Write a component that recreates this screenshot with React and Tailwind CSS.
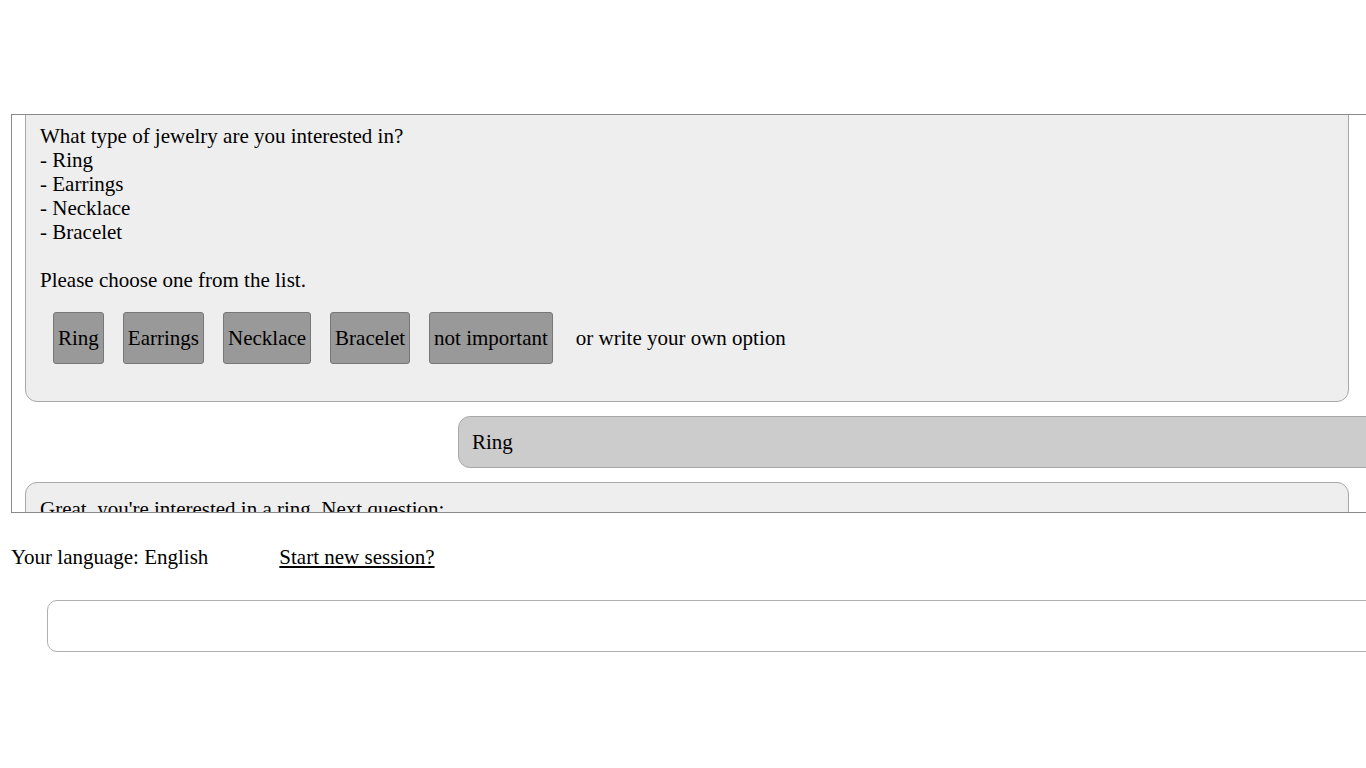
import React from 'react';

const options = ['Ring', 'Earrings', 'Necklace', 'Bracelet', 'not important'];

export default function App() {
  return (
    <div className="w-screen h-screen overflow-hidden bg-white text-black font-['Liberation_Serif','Times_New_Roman',serif] text-[21px] leading-[24px]">
      {/* chat log, scrolled down a bit */}
      <div className="ml-[11px] mt-[114px] w-[1420px] h-[399px] border-t border-b border-l border-[#8a8a8a] overflow-hidden">
        <div className="-mt-[24px] flex flex-col gap-[14px]">
          <div className="ml-[13px] w-[1324px] bg-[#eeeeee] border border-[#a8a8a8] rounded-[12px] pl-[14px] pt-[32px] pb-[37px]">
            <p>What type of jewelry are you interested in?</p>
            <p>- Ring</p>
            <p>- Earrings</p>
            <p>- Necklace</p>
            <p>- Bracelet</p>
            <p className="h-[24px]" />
            <p>Please choose one from the list.</p>
            <div className="mt-[20px] pl-[13px] flex items-center gap-[19px]">
              {options.map((o) => (
                <button
                  key={o}
                  className="bg-[#999999] border border-[#777777] rounded-[3px] px-[4px] py-[13px] leading-[24px] cursor-pointer"
                >
                  {o}
                </button>
              ))}
              <span className="ml-[4px]">or write your own option</span>
            </div>
          </div>

          <div className="ml-[446px] w-[1000px] h-[52px] bg-[#cccccc] border border-[#a8a8a8] rounded-[12px] pl-[13px] flex items-center">
            Ring
          </div>

          <div className="ml-[13px] w-[1324px] bg-[#eeeeee] border border-[#a8a8a8] rounded-[12px] pl-[14px] pt-[14px] pb-[36px]">
            <p>Great, you're interested in a ring. Next question:</p>
          </div>
        </div>
      </div>

      <div className="ml-[11px] mt-[32px] flex items-center">
        <span>Your language: English</span>
        <a href="#" className="ml-[71px] underline">Start new session?</a>
      </div>

      <div className="ml-[47px] mt-[31px] w-[1400px] h-[52px] border border-[#b0b0b0] rounded-[10px] bg-white" />
    </div>
  );
}
